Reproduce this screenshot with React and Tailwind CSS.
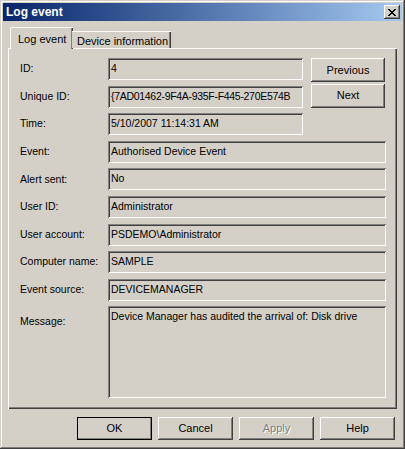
const raised =
  "shadow-[inset_-1px_-1px_#404040,inset_1px_1px_#ffffff,inset_-2px_-2px_#808080,inset_2px_2px_#d4d0c8]";
const sunken =
  "shadow-[inset_1px_1px_#808080,inset_-1px_-1px_#ffffff,inset_2px_2px_#404040,inset_-2px_-2px_#d4d0c8]";

function Field({ value, width = "w-[278px]", height = "h-[22px]", tight }) {
  return (
    <div
      className={`${width} ${height} ${sunken} bg-[#d4d0c8] pl-[3px] pr-[2px] pt-[4px] text-[10.5px] leading-[13px] text-black whitespace-nowrap overflow-hidden ${
        tight ? "tracking-[-0.3px]" : ""
      }`}
    >
      {value}
    </div>
  );
}

function Row({ label, children, tall }) {
  return (
    <div className={`flex ${tall ? "items-start" : "items-center h-[22px]"}`}>
      <div
        className={`w-[88px] shrink-0 text-[10.5px] text-black ${tall ? "pt-[8px]" : ""}`}
      >
        {label}
      </div>
      {children}
    </div>
  );
}

function Button({ children, className = "", disabled, isDefault }) {
  return (
    <button
      className={`${className} ${raised} bg-[#d4d0c8] text-[11px] flex items-center justify-center ${
        disabled
          ? "text-[#808080] [text-shadow:1px_1px_#ffffff]"
          : "text-black"
      } ${isDefault ? "outline outline-1 outline-black -outline-offset-1" : ""}`}
    >
      {children}
    </button>
  );
}

export default function App() {
  return (
    <div className="w-[405px] h-[449px] bg-[#d4d0c8] p-[3px] font-['Liberation_Sans',Arial,sans-serif] shadow-[inset_-1px_-1px_#404040,inset_1px_1px_#d4d0c8,inset_-2px_-2px_#808080,inset_2px_2px_#ffffff] flex flex-col">
      {/* Title bar */}
      <div className="h-[18px] bg-linear-to-r from-[#0a246a] to-[#a6caf0] flex items-center justify-between pl-[3px] pr-[2px]">
        <span className="text-white font-bold text-[12px]">Log event</span>
        <button className={`w-[16px] h-[14px] bg-[#d4d0c8] ${raised} flex items-center justify-center`}>
          <svg width="8" height="7" viewBox="0 0 8 7" shapeRendering="crispEdges">
            <path
              d="M0 0h2v1h-2zM6 0h2v1h-2zM1 1h2v1h-2zM5 1h2v1h-2zM2 2h4v1h-4zM3 3h2v1h-2zM2 4h4v1h-4zM1 5h2v1h-2zM5 5h2v1h-2zM0 6h2v1h-2zM6 6h2v1h-2z"
              fill="#000"
            />
          </svg>
        </button>
      </div>

      {/* Tabs + panel */}
      <div className="px-[5px] pt-[6px]">
        <div className="flex items-end h-[21px] pl-[2px] relative z-10">
          <div className="h-[22px] -mb-[1px] w-[63px] bg-[#d4d0c8] border-t border-l border-white rounded-tl-[2px] shadow-[inset_-1px_0_#404040,inset_-2px_0_#808080] text-[11px] text-black pl-[7px] pt-[3px]">
            Log event
          </div>
          <div className="h-[17px] w-[99px] bg-[#d4d0c8] border-t border-white shadow-[inset_-1px_0_#404040,inset_-2px_0_#808080] text-[11px] text-black pl-[5px] pt-[1px] -ml-[1px]">
            Device information
          </div>
        </div>
        <div className="h-[361px] border-t border-l border-white shadow-[inset_-1px_-1px_#404040,inset_-2px_-2px_#808080] pl-[11px] pt-[9px]">
          <div className="flex flex-col gap-[5.6px]">
            <Row label="ID:">
              <Field value="4" width="w-[195px]" />
              <Button className="ml-[8px] w-[74px] h-[24px] self-start">Previous</Button>
            </Row>
            <Row label="Unique ID:">
              <Field value="{7AD01462-9F4A-935F-F445-270E574B" width="w-[195px]" tight />
              <Button className="ml-[8px] w-[74px] h-[24px] self-start -mt-[2px]">Next</Button>
            </Row>
            <Row label="Time:">
              <Field value="5/10/2007 11:14:31 AM" width="w-[195px]" />
            </Row>
            <Row label="Event:">
              <Field value="Authorised Device Event" />
            </Row>
            <Row label="Alert sent:">
              <Field value="No" />
            </Row>
            <Row label="User ID:">
              <Field value="Administrator" />
            </Row>
            <Row label="User account:">
              <Field value="PSDEMO\Administrator" />
            </Row>
            <Row label="Computer name:">
              <Field value="SAMPLE" />
            </Row>
            <Row label="Event source:">
              <Field value="DEVICEMANAGER" />
            </Row>
            <Row label="Message:" tall>
              <Field
                value="Device Manager has audited the arrival of: Disk drive"
                height="h-[92px]"
              />
            </Row>
          </div>
        </div>
      </div>

      {/* Bottom buttons */}
      <div className="flex justify-end gap-[6px] pr-[7px] mt-[8px]">
        <Button className="w-[75px] h-[23px]" isDefault>OK</Button>
        <Button className="w-[75px] h-[23px]">Cancel</Button>
        <Button className="w-[75px] h-[23px]" disabled>Apply</Button>
        <Button className="w-[75px] h-[23px]">Help</Button>
      </div>
    </div>
  );
}
